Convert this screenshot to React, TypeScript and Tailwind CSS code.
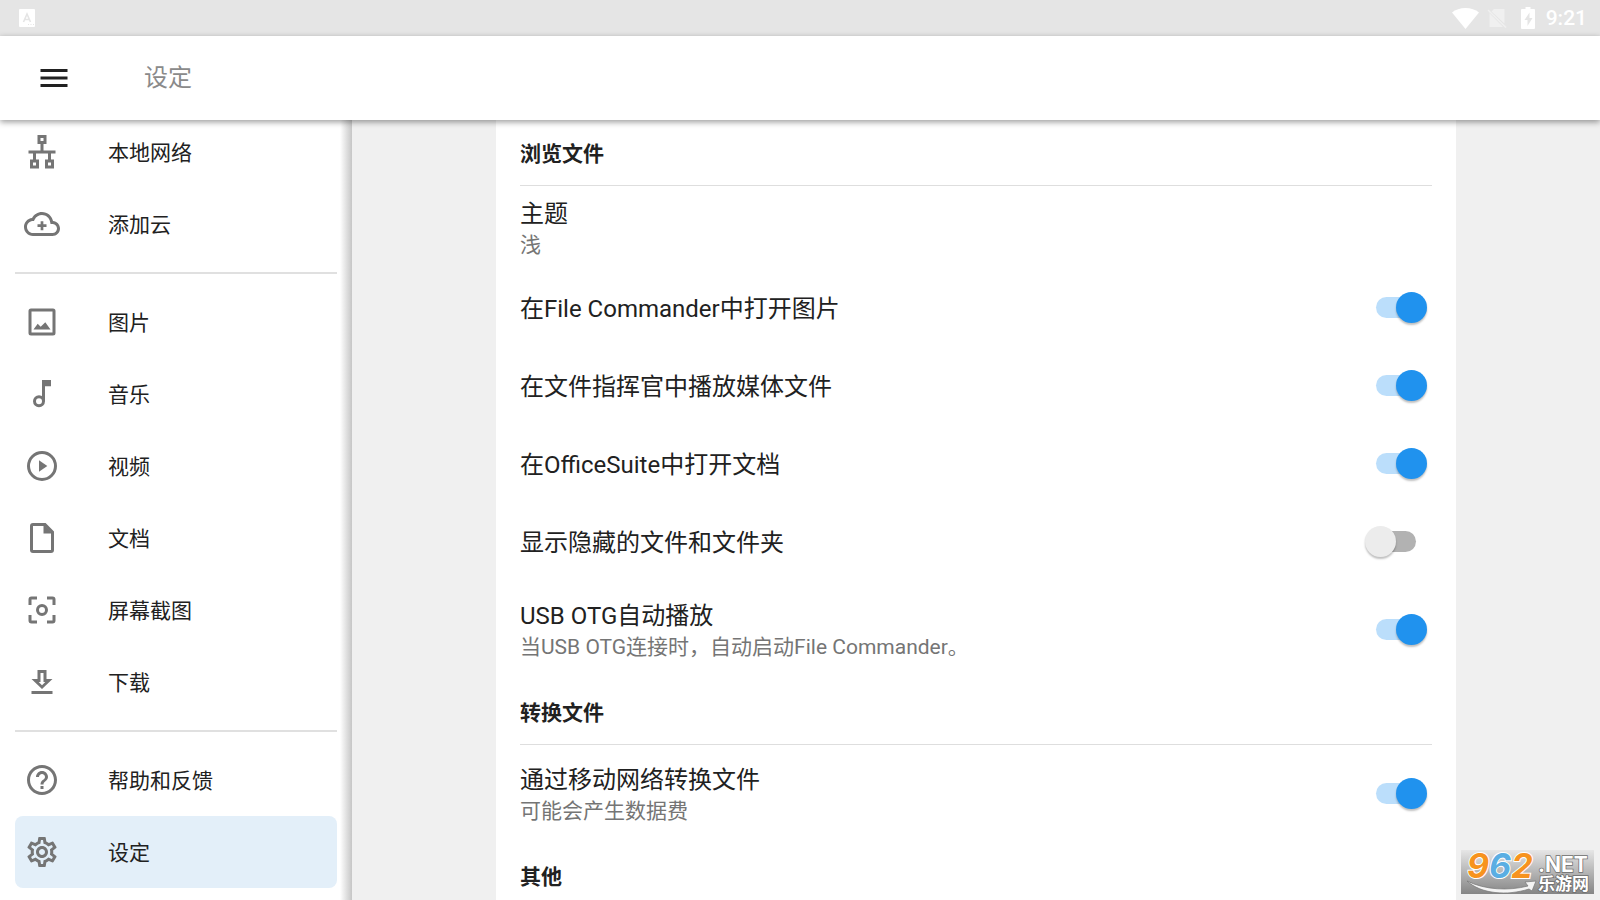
import { useState } from "react";
import type { ReactNode } from "react";
import { MdHelpOutline, MdMenu, MdOutlineSettings } from "react-icons/md";
import { clsx } from "clsx";

function Glyph({ children }: { children: ReactNode }) {
  return (
    <svg viewBox="0 0 36 36" className="h-9 w-9 shrink-0" fill="none" stroke="currentColor" strokeWidth="3" aria-hidden="true">
      {children}
    </svg>
  );
}

const NetworkIcon = () => (
  <Glyph>
    <rect x="15" y="2.5" width="6" height="6" />
    <rect x="7.5" y="27" width="6" height="6" />
    <rect x="22.5" y="27" width="6" height="6" />
    <path d="M18 9v9M4.5 18h27M10.5 18v8M25.5 18v8" />
  </Glyph>
);

const CloudIcon = () => (
  <svg viewBox="0 0 24 24" className="h-9 w-9 shrink-0" fill="currentColor" aria-hidden="true">
    <path d="M19.35 10.04C18.67 6.59 15.64 4 12 4 9.11 4 6.6 5.64 5.35 8.04 2.34 8.36 0 10.91 0 14c0 3.31 2.69 6 6 6h13c2.76 0 5-2.24 5-5 0-2.64-2.05-4.78-4.65-4.96zM19 18H6c-2.21 0-4-1.79-4-4 0-2.05 1.53-3.76 3.56-3.97l1.07-.11.5-.95C8.08 7.14 9.94 6 12 6c2.62 0 4.88 1.86 5.39 4.43l.3 1.5 1.53.11c1.56.1 2.78 1.41 2.78 2.96 0 1.65-1.35 3-3 3z" />
    <path d="M11.1 10.1h1.8v2.1H15V14h-2.1v2.1h-1.8V14H9v-1.8h2.1z" />
  </svg>
);

const ImageIcon = () => (
  <Glyph>
    <rect x="6" y="6" width="24" height="24" rx="1" />
    <path d="M9.5 25.5 13.7 19.7 16.7 22.7 21.3 18.3 26.5 25.5z" fill="currentColor" stroke="none" />
  </Glyph>
);

const MusicIcon = () => (
  <Glyph>
    <circle cx="15" cy="25.3" r="4.5" />
    <path d="M18 4h9v6.3h-6v15h-3z" fill="currentColor" stroke="none" />
  </Glyph>
);

const VideoIcon = () => (
  <Glyph>
    <circle cx="18" cy="18" r="13.5" />
    <path d="M15 12.3v11.4l8.3-5.7z" fill="currentColor" stroke="none" />
  </Glyph>
);

const DocIcon = () => (
  <Glyph>
    <path d="M9 4.5h12l7.5 7.5v18a1.5 1.5 0 0 1-1.5 1.5H9a1.5 1.5 0 0 1-1.5-1.5V6A1.5 1.5 0 0 1 9 4.5z" />
    <path d="M19.5 4.5v9h9z" fill="currentColor" stroke="none" />
  </Glyph>
);

const ScreenshotIcon = () => (
  <Glyph>
    <path d="M6 13V7.5A1.5 1.5 0 0 1 7.5 6H13M23 6h5.500A1.5 1.5 0 0 1 30 7.5V13M30 23v5.500a1.5 1.5 0 0 1-1.5 1.5H23M13 30H7.5A1.5 1.5 0 0 1 6 28.500V23" />
    <circle cx="18" cy="18" r="4.5" />
  </Glyph>
);

const DownloadIcon = () => (
  <svg viewBox="0 0 24 24" className="h-9 w-9 shrink-0" fill="currentColor" aria-hidden="true">
    <path fillRule="evenodd" d="M9 4v6H5l7 6.7 7-6.7h-4V4zM13 6v6h1.2L12 14.1 9.8 12H11V6zM5 18h14v2H5z" />
  </svg>
);

const HelpIcon = () => <MdHelpOutline className="h-9 w-9 shrink-0" />;
const GearIcon = () => <MdOutlineSettings className="h-9 w-9 shrink-0" />;

const groups = [
  [
    { label: "本地网络", Icon: NetworkIcon },
    { label: "添加云", Icon: CloudIcon },
  ],
  [
    { label: "图片", Icon: ImageIcon },
    { label: "音乐", Icon: MusicIcon },
    { label: "视频", Icon: VideoIcon },
    { label: "文档", Icon: DocIcon },
    { label: "屏幕截图", Icon: ScreenshotIcon },
    { label: "下载", Icon: DownloadIcon },
  ],
  [
    { label: "帮助和反馈", Icon: HelpIcon },
    { label: "设定", Icon: GearIcon, active: true },
  ],
];

function StatusBar() {
  return (
    <div className="flex h-9 shrink-0 items-center justify-between bg-[#e5e5e5] pl-[19px] pr-[13px] text-white">
      <svg viewBox="0 0 16 18" className="h-[18px] w-4" aria-hidden="true">
        <rect width="16" height="18" rx="1" fill="#fff" />
        <path d="M4.5 13 8 5l3.5 8M5.8 10.5h4.4" fill="none" stroke="#e5e5e5" strokeWidth="1.6" />
        <path d="M9 15.5h1M11.5 15.5h1M14 15.5h1" stroke="#e5e5e5" />
      </svg>
      <div className="flex items-center">
        <svg viewBox="0 0 27 21" className="h-[21px] w-[27px]" fill="currentColor" aria-hidden="true">
          <path d="M13.5 21 0 4.5C3.5 1.6 8.3 0 13.5 0S23.5 1.6 27 4.5z" />
        </svg>
        <svg viewBox="0 0 20 20" className="ml-2 h-5 w-5" aria-hidden="true">
          <path d="M7 1h10.5v14.5L4.5 3.5zM2.500 5.200 16 19H2.5z" fill="#f0f0f0" />
          <path d="M1 2l18 17.5" stroke="#f0f0f0" strokeWidth="1.5" />
        </svg>
        <svg viewBox="0 0 14 22" className="ml-[14px] h-[22px] w-[14px]" aria-hidden="true">
          <path d="M4.5 0h5v2H13q1 0 1 1v18q0 1-1 1H1q-1 0-1-1V3q0-1 1-1h3.5z" fill="#fff" />
          <path d="M8.5 5.500 3.5 13H6.5v6l5-8H8.5z" fill="#e5e5e5" />
        </svg>
        <span className="ml-[11px] text-[21px] font-medium leading-6">9:21</span>
      </div>
    </div>
  );
}

function Sidebar() {
  return (
    <aside className="flex w-[352px] shrink-0 bg-white">
      <nav className="flex flex-1 flex-col justify-end overflow-hidden pb-3 pl-[15px] pr-[3px]">
        {groups.map((items, i) => (
          <ul key={i} className={clsx("shrink-0", i > 0 && "mt-3 border-t-2 border-[#e0e0e0] pt-3")}>
            {items.map(({ label, Icon, active }: { label: string; Icon: () => ReactNode; active?: boolean }) => (
              <li key={label}>
                <a
                  href="#"
                  aria-current={active ? "page" : undefined}
                  className={clsx(
                    "flex h-[72px] items-center gap-12 rounded-lg pl-[9px] text-[21px] text-[#212121]",
                    active && "bg-[#e3eff9]",
                  )}
                >
                  <span className="text-[#757575]"><Icon /></span>
                  <span className="pt-1">{label}</span>
                </a>
              </li>
            ))}
          </ul>
        ))}
      </nav>
      <div className="w-3 bg-linear-to-r from-white to-[#c6c6c6]" />
    </aside>
  );
}

function SectionTitle({ children }: { children: ReactNode }) {
  return (
    <h2 className="flex h-[66px] items-center border-b border-[#dedede] pt-1 text-[21px] font-bold">{children}</h2>
  );
}

function SwitchRow({ label, hint, initial = true }: { label: string; hint?: string; initial?: boolean }) {
  const [on, setOn] = useState(initial);

  return (
    <label className={clsx("flex cursor-pointer items-center justify-between", hint ? "h-[98px]" : "h-[78px]")}>
      <span className="pt-[2px]">
        <span className="block text-2xl">{label}</span>
        {hint && <span className="block text-[21px] leading-[30px] text-[#757575]">{hint}</span>}
      </span>
      <input
        type="checkbox"
        role="switch"
        checked={on}
        onChange={(e) => setOn(e.target.checked)}
        className="relative mb-[2px] mr-[5px] h-[31px] w-[62px] shrink-0 cursor-pointer appearance-none before:absolute before:left-[11px] before:top-[5px] before:h-[21px] before:w-10 before:rounded-full before:bg-[#b2b2b2] after:absolute after:left-0 after:top-0 after:size-[31px] after:rounded-full after:bg-[#ececec] after:shadow-[0_2px_2px_rgba(0,0,0,0.25)] checked:before:bg-[#bbdefb] checked:after:left-[31px] checked:after:bg-[#2092ee]"
      />
    </label>
  );
}

function Watermark() {
  return (
    <svg
      viewBox="0 0 133 44"
      className="absolute bottom-[6px] right-[6px] h-11 w-[133px] overflow-visible"
      role="img"
      aria-label="962.NET 乐游网"
    >
      <defs>
        <linearGradient id="plate" x1="0" y1="0" x2="0" y2="1">
          <stop offset="0" stopColor="#e6e6e6" />
          <stop offset="1" stopColor="#858585" />
        </linearGradient>
      </defs>
      <rect width="133" height="44" fill="url(#plate)" />
      <text x="6" y="28" className="font-[Inter,sans-serif] text-[34px] font-bold italic" stroke="#fff" strokeWidth="2" paintOrder="stroke">
        <tspan fill="#f7931e">9</tspan>
        <tspan fill="#5aaee3">6</tspan>
        <tspan fill="#f7931e">2</tspan>
      </text>
      <path d="M6 31C24 40 48 41 67 36l-3-4 11-1-4 10-3-2C46 46 20 44 6 31z" fill="#f4f4f4" stroke="#777" strokeWidth="0.7" />
      <g fill="#fff" stroke="#6d6d6d" strokeWidth="1.5" paintOrder="stroke">
        <text x="77" y="22" className="font-[Inter,sans-serif] text-[21px] font-bold">.NET</text>
        <text x="77" y="40" className="text-[17px] font-bold">乐游网</text>
      </g>
    </svg>
  );
}

export default function App() {
  return (
    <div lang="zh-CN" className="relative flex h-screen flex-col overflow-hidden bg-[#f0f0f0] font-[Roboto,'Noto_Sans_CJK_SC',sans-serif] text-[#212121]">
      <StatusBar />

      <header className="relative z-10 flex h-[84px] shrink-0 items-center gap-[72px] bg-white pl-9 shadow-[0_2px_6px_rgba(0,0,0,0.4)]">
        <button type="button" aria-label="菜单">
          <MdMenu className="h-9 w-9" />
        </button>
        <h1 className="text-2xl text-[#8a8a8a]">设定</h1>
      </header>

      <div className="flex min-h-0 flex-1">
        <Sidebar />

        <main className="min-w-0 flex-1 overflow-hidden">
          <div className="mx-auto min-h-full max-w-[960px] bg-white px-6">
            <SectionTitle>浏览文件</SectionTitle>
            <button type="button" className="block h-[83px] w-full pt-[2px] text-left">
              <span className="block text-2xl">主题</span>
              <span className="block text-[21px] leading-[30px] text-[#757575]">浅</span>
            </button>
            <SwitchRow label="在File Commander中打开图片" />
            <SwitchRow label="在文件指挥官中播放媒体文件" />
            <SwitchRow label="在OfficeSuite中打开文档" />
            <SwitchRow label="显示隐藏的文件和文件夹" initial={false} />
            <SwitchRow label="USB OTG自动播放" hint="当USB OTG连接时，自动启动File Commander。" />

            <SectionTitle>转换文件</SectionTitle>
            <SwitchRow label="通过移动网络转换文件" hint="可能会产生数据费" />

            <SectionTitle>其他</SectionTitle>
          </div>
        </main>
      </div>

      <Watermark />
    </div>
  );
}
